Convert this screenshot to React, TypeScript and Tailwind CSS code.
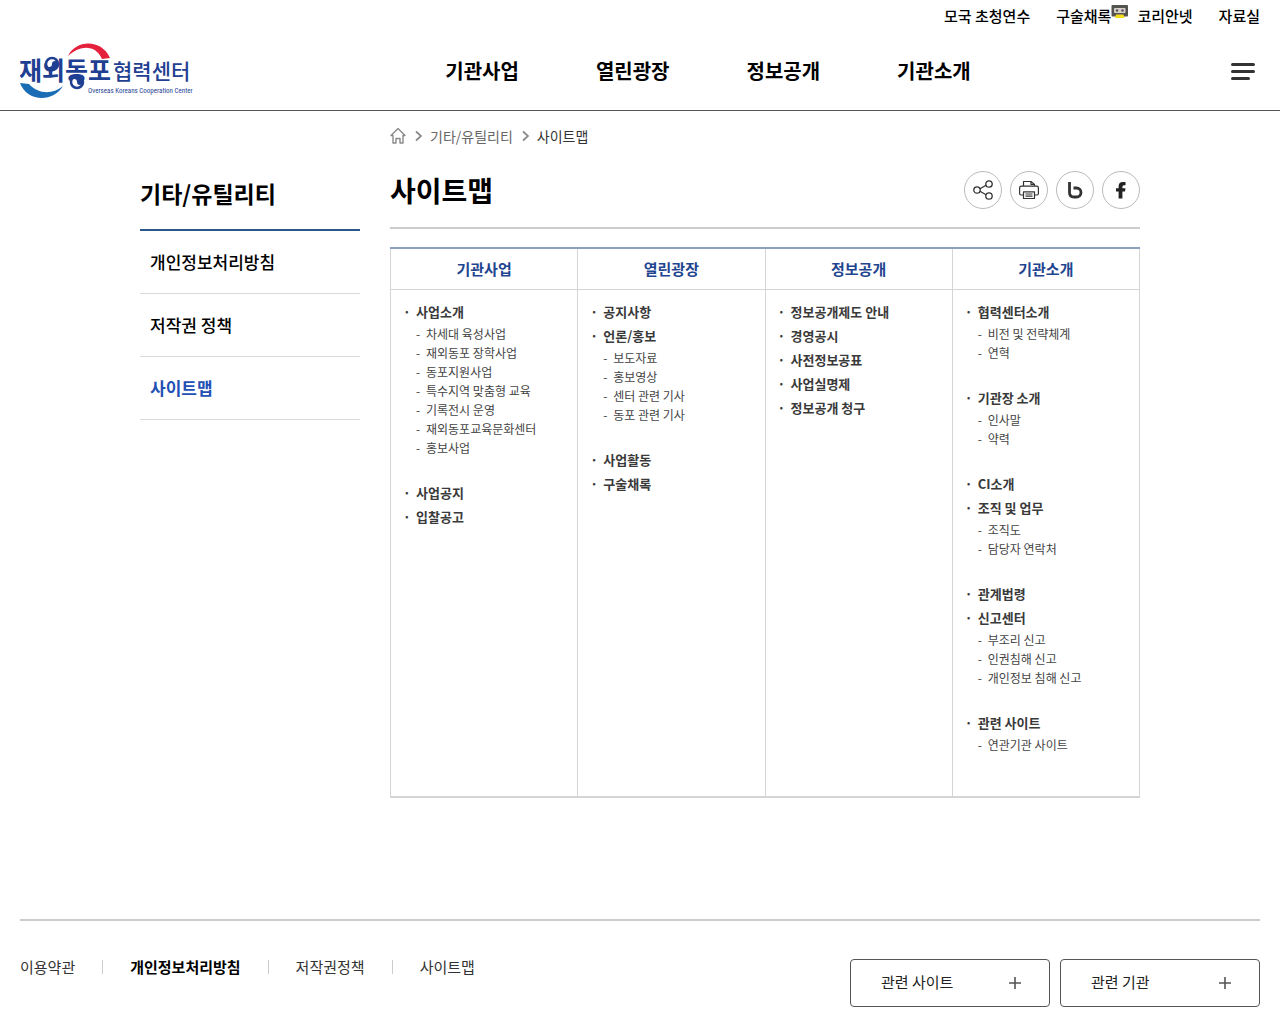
import React from "react";

interface SitemapEntry {
  label: string;
  children?: string[];
}

interface SitemapColumn {
  title: string;
  entries: SitemapEntry[];
}

const topLinks = ["모국 초청연수", "구술채록", "코리안넷", "자료실"];
const mainMenu = ["기관사업", "열린광장", "정보공개", "기관소개"];
const sideMenu = ["개인정보처리방침", "저작권 정책", "사이트맵"];
const footerLinks = ["이용약관", "개인정보처리방침", "저작권정책", "사이트맵"];
const relatedMenus = ["관련 사이트", "관련 기관"];

const sitemap: SitemapColumn[] = [
  {
    title: "기관사업",
    entries: [
      {
        label: "사업소개",
        children: [
          "차세대 육성사업",
          "재외동포 장학사업",
          "동포지원사업",
          "특수지역 맞춤형 교육",
          "기록전시 운영",
          "재외동포교육문화센터",
          "홍보사업",
        ],
      },
      { label: "사업공지" },
      { label: "입찰공고" },
    ],
  },
  {
    title: "열린광장",
    entries: [
      { label: "공지사항" },
      { label: "언론/홍보", children: ["보도자료", "홍보영상", "센터 관련 기사", "동포 관련 기사"] },
      { label: "사업활동" },
      { label: "구술채록" },
    ],
  },
  {
    title: "정보공개",
    entries: [
      { label: "정보공개제도 안내" },
      { label: "경영공시" },
      { label: "사전정보공표" },
      { label: "사업실명제" },
      { label: "정보공개 청구" },
    ],
  },
  {
    title: "기관소개",
    entries: [
      { label: "협력센터소개", children: ["비전 및 전략체계", "연혁"] },
      { label: "기관장 소개", children: ["인사말", "약력"] },
      { label: "CI소개" },
      { label: "조직 및 업무", children: ["조직도", "담당자 연락처"] },
      { label: "관계법령" },
      { label: "신고센터", children: ["부조리 신고", "인권침해 신고", "개인정보 침해 신고"] },
      { label: "관련 사이트", children: ["연관기관 사이트"] },
    ],
  },
];

function Logo() {
  return (
    <svg width="176" height="60" viewBox="0 0 176 60" role="img" aria-label="재외동포협력센터">
      <path d="M48 15 C56 -2 82 -2 90 17 L82 18 C76 4 61 3 48 15Z" fill="#e4203c" />
      <path d="M0 42 C7 61 33 62 43 45 C32 54 18 53 9 43Z" fill="#1a6cb5" />
      <g fill="#1f3f93" fontFamily="'Noto Sans CJK KR', sans-serif">
        <text x="-1" y="39" fontSize="25" fontWeight="700">재외동포</text>
        <text x="93" y="38" fontSize="21" fontWeight="500">협력센터</text>
      </g>
      {/* taegeuk swirls inside 외 and 동 */}
      <g fill="#fff" stroke="#1f3f93" strokeWidth="2.5">
        <circle cx="32" cy="23" r="6" />
        <circle cx="57" cy="41" r="6" />
      </g>
      <g fill="#1f3f93">
        <path d="M26 23 A6 6 0 0 0 38 23 A3 3 0 0 0 32 23 A3 3 0 0 1 26 23Z" />
        <path d="M51 41 A6 6 0 0 1 63 41 A3 3 0 0 1 57 41 A3 3 0 0 0 51 41Z" />
      </g>
      <text x="68" y="52" fontSize="7" fontFamily="'Liberation Sans Narrow', 'Roboto Condensed', sans-serif" fill="#1f3f93">
        Overseas Koreans Cooperation Center
      </text>
    </svg>
  );
}

function CassetteIcon() {
  return (
    <svg width="18" height="14" viewBox="0 0 18 14" aria-hidden="true">
      <rect x="0.5" y="0" width="16.5" height="11.5" rx="1" fill="#55534f" />
      <rect x="3" y="3" width="11.5" height="5" rx="1" fill="#d8d0cc" />
      <circle cx="6" cy="5.5" r="1.3" fill="#55534f" />
      <circle cx="11.5" cy="5.5" r="1.3" fill="#55534f" />
      <path d="M4 13 L5 9.5 H12.5 L13.5 13Z" fill="#f2dc1e" />
    </svg>
  );
}

function Chevron() {
  return (
    <svg width="8" height="12" viewBox="0 0 8 12" fill="none" stroke="#8a8a8a" strokeWidth="1.8" aria-hidden="true">
      <path d="M2 1.5 L7 6 L2 10.5" />
    </svg>
  );
}

function HomeIcon() {
  return (
    <svg width="16" height="18" viewBox="0 0 16 18" fill="none" stroke="#8a8a8a" strokeWidth="1.4" strokeLinejoin="round" aria-hidden="true">
      <path d="M8 1.5 L15 8.5 H13 V16 H10 V11.5 H6 V16 H3 V8.5 H1Z" />
    </svg>
  );
}

const shareButtons = [
  {
    label: "공유",
    icon: (
      <g fill="none" stroke="#333" strokeWidth="1.3">
        <circle cx="4" cy="10" r="3.2" />
        <circle cx="16" cy="4" r="3.2" />
        <circle cx="16" cy="16" r="3.2" />
        <path d="M7 8.7 L13 5.3 M7 11.3 L13 14.7" />
      </g>
    ),
  },
  {
    label: "인쇄",
    icon: (
      <g fill="none" stroke="#333" strokeWidth="1.2" strokeLinejoin="round">
        <path d="M4.5 6 V1.5 H12 L15.5 4.5 V6 M12 1.5 V4.5 H15.5" />
        <path d="M4.5 15 H2 Q0.6 15 0.6 13.5 V8 Q0.6 6.2 2.3 6.2 H17.7 Q19.4 6.2 19.4 8 V13.5 Q19.4 15 18 15 H15.5" />
        <path d="M4.5 11.8 H15.5 V18.5 H4.5Z M6.5 14 H13.5 M6.5 16.2 H13.5" />
      </g>
    ),
  },
  {
    label: "블로그",
    icon: <path d="M4.5 2 V12.5 Q4.5 17 9 17 H11.5 A4.5 4.5 0 0 0 11.5 8 H8.5" fill="none" stroke="#333" strokeWidth="2.8" />,
  },
  {
    label: "페이스북",
    icon: <path d="M7.6 18.5 V11.5 H5 V8.3 H7.6 V6.3 Q7.6 2 12 2 H14.5 V5.3 H13 Q11.4 5.3 11.4 6.8 V8.3 H14.5 L14 11.5 H11.4 V18.5Z" fill="#222" />,
  },
];

function EntryList({ entries }: { entries: SitemapEntry[] }) {
  return (
    <ul>
      {entries.map((entry) => (
        <li key={entry.label}>
          <a href="#" className="flex text-[13px] leading-6 font-bold text-[#3a3a3a]">
            <span className="w-[13px]">·</span>
            {entry.label}
          </a>
          {entry.children && (
            <ul className="pb-6 pl-[13px]">
              {entry.children.map((child) => (
                <li key={child}>
                  <a href="#" className="flex text-xs leading-[19px] text-[#444]">
                    <span className="w-[10px]">-</span>
                    {child}
                  </a>
                </li>
              ))}
            </ul>
          )}
        </li>
      ))}
    </ul>
  );
}

export default function App() {
  return (
    <div className="bg-white font-['Noto_Sans_CJK_KR',sans-serif] text-black">
      <header className="border-b border-[#555]">
        <ul className="flex h-8 items-center justify-end gap-[26px] px-5 text-[15px] font-medium">
          {topLinks.map((link) => (
            <li key={link} className="relative">
              <a href="#">{link}</a>
              {link === "구술채록" && (
                <span className="absolute top-0 left-full">
                  <CassetteIcon />
                </span>
              )}
            </li>
          ))}
        </ul>
        <div className="flex h-[78px] items-center px-5">
          <a href="#">
            <Logo />
          </a>
          <nav className="flex-1">
            <ul className="flex justify-center gap-[77px] text-xl font-bold">
              {mainMenu.map((item) => (
                <li key={item}>
                  <a href="#">{item}</a>
                </li>
              ))}
            </ul>
          </nav>
          <button type="button" aria-label="전체메뉴" className="flex w-10 flex-col gap-1 pr-[5px] pl-[11px]">
            <span className="h-[3px] w-6 rounded-full bg-[#333]" />
            <span className="h-[3px] w-6 rounded-full bg-[#333]" />
            <span className="h-[3px] w-[19px] rounded-full bg-[#333]" />
          </button>
        </div>
      </header>

      <div className="mx-auto flex max-w-[1000px] items-start gap-[30px]">
        <aside className="w-[220px] pt-[62px]">
          <h2 className="border-b-2 border-[#29588a] pb-4 text-[23px] leading-10 font-bold">기타/유틸리티</h2>
          <ul>
            {sideMenu.map((item) => (
              <li key={item} className="border-b border-[#d9d9d9]">
                <a
                  href="#"
                  className={`block px-[10px] text-[17px] leading-[62px] ${
                    item === "사이트맵" ? "font-bold text-[#2350b5]" : "font-medium"
                  }`}
                >
                  {item}
                </a>
              </li>
            ))}
          </ul>
        </aside>

        <main className="flex-1">
          <nav className="flex items-center gap-2 pt-[15px] text-sm">
            <a href="#" aria-label="홈">
              <HomeIcon />
            </a>
            <Chevron />
            <a href="#" className="text-[#666]">기타/유틸리티</a>
            <Chevron />
            <span className="text-[#333]">사이트맵</span>
          </nav>

          <div className="flex items-center justify-between border-b-2 border-[#ccc] pt-[25px] pb-[18px]">
            <h1 className="text-[28px] leading-[38px] font-bold">사이트맵</h1>
            <div className="flex gap-2">
              {shareButtons.map((button) => (
                <button
                  key={button.label}
                  type="button"
                  aria-label={button.label}
                  className="flex size-[38px] items-center justify-center rounded-full border border-[#bbb]"
                >
                  <svg width="20" height="20" viewBox="0 0 20 20">
                    {button.icon}
                  </svg>
                </button>
              ))}
            </div>
          </div>

          <table className="mt-[18px] w-full table-fixed border-collapse border border-t-2 border-b-2 border-[#d5d5d5] border-t-[#8aa0bc]">
            <thead>
              <tr>
                {sitemap.map((column) => (
                  <th key={column.title} scope="col" className="h-[41px] border-x border-b border-[#d5d5d5] text-[15px] font-bold text-[#1f4590]">
                    {column.title}
                  </th>
                ))}
              </tr>
            </thead>
            <tbody>
              <tr>
                {sitemap.map((column) => (
                  <td key={column.title} className="border-x border-[#d5d5d5] px-3 pt-[10px] pb-[18px] align-top">
                    <EntryList entries={column.entries} />
                  </td>
                ))}
              </tr>
            </tbody>
          </table>
        </main>
      </div>

      <footer className="mx-5 mt-[121px] border-t-2 border-[#ccc]">
        <div className="flex items-start justify-between pt-[38px] pb-4">
          <ul className="flex items-center text-[15px] leading-4">
            {footerLinks.map((link, index) => (
              <li key={link} className="flex items-center">
                {index > 0 && <span className="mx-[27px] h-[14px] w-px bg-[#ccc]" />}
                <a href="#" className={link === "개인정보처리방침" ? "font-bold" : "text-[#333]"}>
                  {link}
                </a>
              </li>
            ))}
          </ul>
          <div className="flex gap-[10px]">
            {relatedMenus.map((menu) => (
              <button
                key={menu}
                type="button"
                className="flex h-12 w-[200px] items-center justify-between rounded border border-[#555] pr-7 pl-[30px] text-[15px] text-[#222]"
              >
                {menu}
                <svg width="12" height="12" viewBox="0 0 12 12" stroke="#555" strokeWidth="1.6" aria-hidden="true">
                  <path d="M6 0 V12 M0 6 H12" />
                </svg>
              </button>
            ))}
          </div>
        </div>
      </footer>
    </div>
  );
}
